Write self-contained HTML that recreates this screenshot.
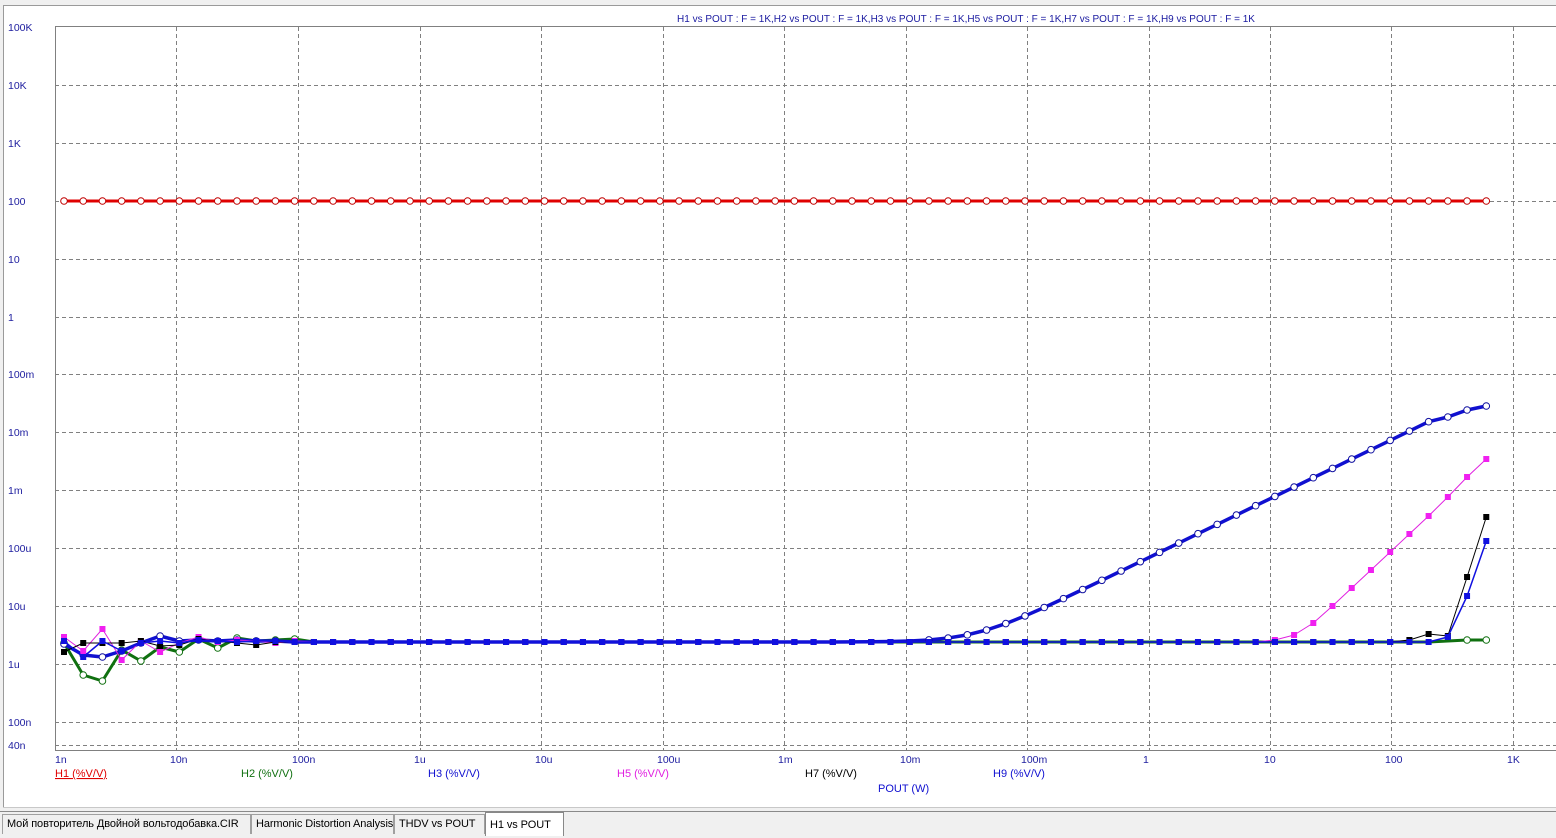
<!DOCTYPE html>
<html><head><meta charset="utf-8"><style>
html,body{margin:0;padding:0;width:1556px;height:838px;overflow:hidden;background:#f0f0f0;font-family:"Liberation Sans","DejaVu Sans",sans-serif}
#wrap{position:absolute;left:0;top:0;width:1556px;height:838px;overflow:hidden}
.tab{position:absolute;top:814px;height:20px;border:1px solid #a0a0a0;border-bottom:none;background:#f0f0f0;font-size:11px;line-height:19px;padding:0 4px;color:#000;box-sizing:border-box;white-space:nowrap;overflow:hidden;letter-spacing:-0.1px}
</style></head><body>
<div id="wrap">
<svg id="s" width="1556" height="838" xmlns="http://www.w3.org/2000/svg" style="position:absolute;left:0;top:0;font-family:'Liberation Sans',sans-serif">
<rect x="0" y="0" width="1556" height="838" fill="#f0f0f0"/>
<rect x="3" y="5" width="1553" height="802" fill="#fff"/>
<line x1="3" y1="5.5" x2="1556" y2="5.5" stroke="#9a9a9a" stroke-width="1"/>
<line x1="3.5" y1="5" x2="3.5" y2="807" stroke="#9a9a9a" stroke-width="1"/>
<line x1="3" y1="807.5" x2="1556" y2="807.5" stroke="#c8c8c8"/>
<line x1="0" y1="811.5" x2="1556" y2="811.5" stroke="#8a8a8a" stroke-width="1"/>
<g id="grid"></g>
<g id="data"></g>
<g id="labels" font-size="10.5"></g>
<text x="966" y="22" font-size="10" fill="#1a1aa0" text-anchor="middle">H1 vs POUT : F = 1K,H2 vs POUT : F = 1K,H3 vs POUT : F = 1K,H5 vs POUT : F = 1K,H7 vs POUT : F = 1K,H9 vs POUT : F = 1K</text>
<g font-size="11">
<text x="55" y="777" fill="#e00000" text-decoration="underline">H1 (%V/V)</text>
<text x="241" y="777" fill="#107010">H2 (%V/V)</text>
<text x="428" y="777" fill="#1010d0">H3 (%V/V)</text>
<text x="617" y="777" fill="#e020e0">H5 (%V/V)</text>
<text x="805" y="777" fill="#000">H7 (%V/V)</text>
<text x="993" y="777" fill="#1010d0">H9 (%V/V)</text>
<text x="878" y="792" fill="#1010d0">POUT (W)</text>
</g>
</svg>
<div class="tab" style="left:2px;width:249px">Мой повторитель Двойной вольтодобавка.CIR</div>
<div class="tab" style="left:251px;width:143px">Harmonic Distortion Analysis</div>
<div class="tab" style="left:394px;width:91px">THDV vs POUT</div>
<div class="tab" style="left:485px;top:812px;height:24px;width:79px;background:#fff;border-color:#888;line-height:25px">H1 vs POUT</div>
</div>
<script>
const NS="http://www.w3.org/2000/svg";
function el(p,t,a){const e=document.createElementNS(NS,t);for(const k in a)e.setAttribute(k,a[k]);p.appendChild(e);return e}
const grid=document.getElementById('grid'),data=document.getElementById('data'),lab=document.getElementById('labels');
const xs=[176,298,420,541,663,784,906,1027,1149,1270,1391,1513];
xs.forEach(x=>el(grid,'line',{x1:x+.5,y1:27,x2:x+.5,y2:750,stroke:'#808080','stroke-dasharray':'4,3'}));
const ylab=['100K','10K','1K','100','10','1','100m','10m','1m','100u','10u','1u','100n'];
ylab.forEach((t,i)=>{const y=Math.round(27+i*57.9);if(i>0)el(grid,'line',{x1:55,y1:y+.5,x2:1556,y2:y+.5,stroke:'#808080','stroke-dasharray':'4,3'});
 const tx=el(lab,'text',{x:8,y:y+4,fill:'#2020a0'});tx.textContent=t;});
el(grid,'line',{x1:55,y1:745.5,x2:1556,y2:745.5,stroke:'#808080','stroke-dasharray':'4,3'});
{const tx=el(lab,'text',{x:8,y:749,fill:'#2020a0'});tx.textContent='40n';}
el(grid,'line',{x1:55.5,y1:26,x2:55.5,y2:750,stroke:'#808080'});
el(grid,'line',{x1:55,y1:26.5,x2:1556,y2:26.5,stroke:'#808080'});
el(grid,'line',{x1:55,y1:750.5,x2:1556,y2:750.5,stroke:'#808080'});
const xl=['1n','10n','100n','1u','10u','100u','1m','10m','100m','1','10','100','1K'];
xl.forEach((t,i)=>{const x=i==0?55:xs[i-1]-6;const tx=el(lab,'text',{x:x,y:763,fill:'#2020a0'});tx.textContent=t;});
const N=75,X=i=>64+19.22*i;
function flat(early){const a=[];for(let i=0;i<N;i++)a.push(i<early.length?early[i]:642);return a}
const h1=[];for(let i=0;i<N;i++)h1.push(201);
const h2=flat([643,675,681,650,661,647,652,639,648,638,641,640,639]);h2[72]=641;h2[73]=640;h2[74]=640;
const h5=flat([637,651,629,660,641,652,643,637,642,640,641,643,641]);
[[63,640],[64,635],[65,623],[66,606],[67,588],[68,570],[69,552],[70,534],[71,516],[72,497],[73,477],[74,459]].forEach(([i,y])=>h5[i]=y);
const h7=flat([652,643,643,643,641,646,645,639,641,643,645,642]);h7[70]=640;h7[71]=634;h7[72]=636;h7[73]=577;h7[74]=517;
const h3=flat([641,657,641,651,643,641,643,640,641,642,641,641]);h3[72]=637;h3[73]=596;h3[74]=541;
const h9=[];const early9=[644,655,657,651,643,636,641,640,641,640,641,641];
for(let i=0;i<N;i++){const u=(X(i)-975)/121.5;let y=642-59*Math.log10(1+Math.pow(10,2*u))/2;if(i<early9.length)y=early9[i];h9.push(y)}
h9[72]=417;h9[73]=410;h9[74]=406;
function series(arr,color,w,mk,mc,skipFlat){
 el(data,'polyline',{points:arr.map((y,i)=>X(i).toFixed(1)+','+y).join(' '),fill:'none',stroke:color,'stroke-width':w,'stroke-linejoin':'round'});
 arr.forEach((y,i)=>{if(skipFlat&&Math.abs(y-642)<1.5&&i>=12)return;
  if(mk=='c')el(data,'circle',{cx:X(i),cy:y,r:3.3,fill:'#fff',stroke:mc,'stroke-width':1});
  else el(data,'rect',{x:X(i)-3,y:y-3,width:6,height:6,fill:mc});});
}
series(h1,'#e00000',3,'c','#c00000');
series(h2,'#107010',3,'c','#107010',true);
series(h9,'#1010d0',3.5,'c','#1010a0',true);
series(h5,'#e020e0',1,'s','#f020f0');
series(h7,'#000',1,'s','#000');
series(h3,'#1010e0',1.5,'s','#1010e0');
</script>
</body></html>
